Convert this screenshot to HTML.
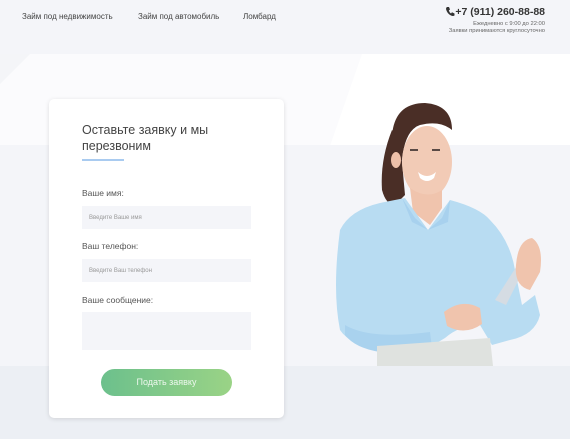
<!DOCTYPE html>
<html><head><meta charset="utf-8"><style>
*{margin:0;padding:0;box-sizing:border-box}
body{width:570px;height:439px;overflow:hidden;position:relative;font-family:"Liberation Sans","Noto Sans CJK SC",sans-serif;background:#fff}
.abs{position:absolute}
.nav{font-size:8px;color:#444;top:12px}
.card{left:49px;top:99px;width:235px;height:319px;background:#fff;border-radius:5px;box-shadow:0 1px 5px rgba(0,0,0,.12)}
.lbl{position:absolute;left:33px;font-size:8.5px;color:#555}
.inp{position:absolute;left:33px;width:169px;height:23px;background:#f4f5f9;font-size:6px;color:#999;padding:9px 0 0 7px}
</style></head><body>
<div class="abs" style="left:0;top:0;width:570px;height:54px;background:#f4f5f9"></div>
<svg class="abs" style="left:0;top:54px" width="570" height="92"><polygon points="0,0 362,0 330,92 0,92" fill="#fbfbfd"/><polygon points="0,0 30,0 0,30" fill="#f4f5f8"/></svg>
<div class="abs" style="left:0;top:145px;width:570px;height:221px;background:#f4f5f9"></div>
<div class="abs" style="left:0;top:366px;width:570px;height:73px;background:#eceff4"></div>
<div class="abs nav" style="left:22px">Займ под недвижимость</div>
<div class="abs nav" style="left:138px">Займ под автомобиль</div>
<div class="abs nav" style="left:243px">Ломбард</div>
<svg class="abs" style="left:445px;top:6px" width="10" height="11" viewBox="0 0 10 11"><path d="M2 1 L4 1 L5 3.5 L3.8 4.5 Q4.5 6.5 6 7.5 L7 6.3 L9.5 7.5 L9.5 9.5 Q8 10.5 6 9.5 Q2 7.5 1 3 Q1 1.5 2 1Z" fill="#333"/></svg>
<div class="abs" style="right:25px;top:6px;font-size:10.5px;color:#333;font-weight:bold">+7 (911) 260-88-88</div>
<div class="abs" style="right:25px;top:21px;font-size:5.8px;color:#666;text-align:right;line-height:7px">Ежедневно с 9:00 до 22:00<br>Заявки принимаются круглосуточно</div>
<svg class="abs" style="left:330px;top:100px" width="240" height="266">
<path d="M62 30 Q50 60 52 90 Q56 105 65 105 L75 95 L70 40Z" fill="#4a2e26"/>
<path d="M62 35 Q65 3 95 3 Q122 5 122 30 Q110 20 90 25 Q75 30 72 60 L65 60Z" fill="#4a2e26"/>
<ellipse cx="97" cy="62" rx="25" ry="36" fill="#f2cbb6"/>
<ellipse cx="66" cy="60" rx="5" ry="8" fill="#eec0a9"/>
<path d="M88 72 Q97 80 106 72 L104 78 Q97 84 90 78Z" fill="#fff"/>
<path d="M80 50 h8 M102 50 h8" stroke="#5a4a45" stroke-width="2"/>
<path d="M80 88 L83 112 L100 125 L112 108 L112 90 Q97 100 80 88Z" fill="#f0c4ad"/>
<path d="M10 130 Q20 110 50 103 L75 98 L98 130 L120 100 Q150 108 160 120 Q180 140 185 170 L192 205 L205 195 L210 215 Q205 235 180 240 L162 245 L150 225 Q130 225 115 238 L100 247 L50 250 Q20 245 10 230 Q2 190 10 130Z" fill="#b8dcf2"/>
<path d="M72 98 L85 118 L98 130 L82 122 Z M120 100 L112 118 L98 130 L118 122Z" fill="#a8d1ee"/>
<path d="M15 225 Q40 240 100 232 L102 248 L50 252 Q25 248 15 235Z" fill="#a9d2ee"/>
<path d="M47 246 L160 238 L163 266 L47 266Z" fill="#dfe2df"/>
<path d="M165 200 L192 158 L198 161 L176 205Z" fill="#d5dce3"/>
<path d="M114 212 Q132 198 150 208 L152 224 Q135 236 117 226Z" fill="#f0c4ad"/>
<path d="M186 165 Q188 140 202 138 Q214 146 210 172 L200 190 Q184 186 186 165Z" fill="#f0c4ad"/>
</svg>
<div class="abs card">
<div class="abs" style="left:33px;top:23px;font-size:12.5px;color:#444;line-height:16px">Оставьте заявку и мы<br>перезвоним</div>
<div class="abs" style="left:33px;top:60px;width:42px;height:2px;background:#a9cbf0"></div>
<div class="lbl" style="top:89px">Ваше имя:</div>
<div class="inp" style="top:107px">Введите Ваше имя</div>
<div class="lbl" style="top:142px">Ваш телефон:</div>
<div class="inp" style="top:160px">Введите Ваш телефон</div>
<div class="lbl" style="top:196px">Ваше сообщение:</div>
<div class="inp" style="top:213px;height:38px"></div>
<div class="abs" style="left:52px;top:270px;width:131px;height:27px;border-radius:14px;background:linear-gradient(90deg,#6cc08c,#9ad386);color:#eef8ee;font-size:9px;text-align:center;line-height:27px">Подать заявку</div>
</div>
</body></html>
